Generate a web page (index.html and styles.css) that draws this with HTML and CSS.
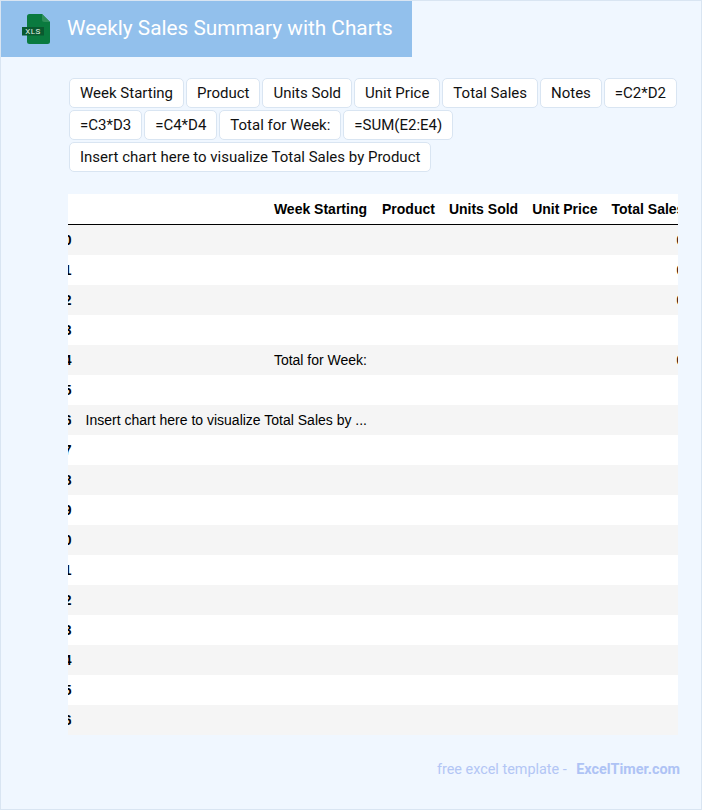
FILE: index.html
```html
<!DOCTYPE html>
<html lang="en">
<head>
<meta charset="utf-8">
<title>Weekly Sales Summary with Charts</title>
<link rel="stylesheet" href="styles.css">
</head>
<body>
<div class="page">
  <header class="banner">
    <svg class="logo" width="30" height="32" viewBox="0 0 30 32" aria-hidden="true">
      <path d="M6 3.500A2.500 2.500 0 0 1 8.500 1H21L29 9V28.500A2.500 2.500 0 0 1 26.500 31H8.500A2.500 2.500 0 0 1 6 28.500Z" fill="#0a7a3f"/>
      <path d="M21 1V6.500A2.500 2.500 0 0 0 23.500 9H29Z" fill="#2f8f5a"/>
      <rect x="1" y="14" width="22" height="8.500" fill="#09592f"/>
      <text x="12" y="21" class="logo-text" text-anchor="middle">XLS</text>
    </svg>
    <h1 class="title">Weekly Sales Summary with Charts</h1>
  </header>
  <main class="main">
    <div class="chips">
      <span class="chip">Week Starting</span>
      <span class="chip">Product</span>
      <span class="chip">Units Sold</span>
      <span class="chip">Unit Price</span>
      <span class="chip">Total Sales</span>
      <span class="chip">Notes</span>
      <span class="chip">=C2*D2</span>
      <span class="chip">=C3*D3</span>
      <span class="chip">=C4*D4</span>
      <span class="chip">Total for Week:</span>
      <span class="chip">=SUM(E2:E4)</span>
      <span class="chip">Insert chart here to visualize Total Sales by Product</span>
    </div>
    <div class="table-wrap">
      <table class="data">
        <thead>
          <tr><th></th><th>Week Starting</th><th>Product</th><th>Units Sold</th><th>Unit Price</th><th>Total Sales</th><th>Notes</th></tr>
        </thead>
        <tbody>
          <tr><th>0</th><td></td><td></td><td></td><td></td><td>0</td><td></td></tr>
          <tr><th>1</th><td></td><td></td><td></td><td></td><td>0</td><td></td></tr>
          <tr><th>2</th><td></td><td></td><td></td><td></td><td>0</td><td></td></tr>
          <tr><th>3</th><td></td><td></td><td></td><td></td><td></td><td></td></tr>
          <tr><th>4</th><td>Total for Week:</td><td></td><td></td><td></td><td>0</td><td></td></tr>
          <tr><th>5</th><td></td><td></td><td></td><td></td><td></td><td></td></tr>
          <tr><th>6</th><td>Insert chart here to visualize Total Sales by ...</td><td></td><td></td><td></td><td></td><td></td></tr>
          <tr><th>7</th><td></td><td></td><td></td><td></td><td></td><td></td></tr>
          <tr><th>8</th><td></td><td></td><td></td><td></td><td></td><td></td></tr>
          <tr><th>9</th><td></td><td></td><td></td><td></td><td></td><td></td></tr>
          <tr><th>10</th><td></td><td></td><td></td><td></td><td></td><td></td></tr>
          <tr><th>11</th><td></td><td></td><td></td><td></td><td></td><td></td></tr>
          <tr><th>12</th><td></td><td></td><td></td><td></td><td></td><td></td></tr>
          <tr><th>13</th><td></td><td></td><td></td><td></td><td></td><td></td></tr>
          <tr><th>14</th><td></td><td></td><td></td><td></td><td></td><td></td></tr>
          <tr><th>15</th><td></td><td></td><td></td><td></td><td></td><td></td></tr>
          <tr><th>16</th><td></td><td></td><td></td><td></td><td></td><td></td></tr>
        </tbody>
      </table>
    </div>
  </main>
  <footer class="footer">free excel template - <a class="brand">ExcelTimer.com</a></footer>
</div>
</body>
</html>
```
FILE: styles.css
```css
* { box-sizing: border-box; }
html, body { margin: 0; padding: 0; }
body { font-family: Roboto, "Liberation Sans", sans-serif; color: #111; }
.page {
  width: 702px;
  height: 810px;
  background: #f0f7ff;
  border: 1px solid #d9e5f2;
  overflow: hidden;
}
.banner {
  width: 411px;
  height: 56px;
  background: #92c0ec;
  display: flex;
  align-items: center;
  padding-left: 20px;
  gap: 16px;
}
.logo { flex: none; }
.logo-text { font: 400 8px Roboto, sans-serif; fill: #e4f3ea; letter-spacing: .5px; }
.title {
  margin: 0 0 2px;
  font-size: 20.8px;
  font-weight: 400;
  color: #fff;
  white-space: nowrap;
}
.main { padding: 21px 23px 0 67px; }
.chips {
  display: flex;
  flex-wrap: wrap;
  gap: 2px;
  padding-left: 1px;
}
.chip {
  height: 30px;
  line-height: 28px;
  padding: 0 10px;
  font-size: 15px;
  color: #111;
  background: #fff;
  border: 1px solid #d9e5f2;
  border-radius: 5px;
  white-space: nowrap;
}
.table-wrap {
  margin-top: 22px;
  background: #fff;
  overflow: hidden;
}
.data {
  margin-left: -19px;
  border-collapse: collapse;
  font-family: "Liberation Sans", Arial, sans-serif;
  font-size: 14px;
  color: #000;
  white-space: nowrap;
}
.data th, .data td {
  padding: 7px;
  text-align: right;
  line-height: 16px;
  height: 30px;
}
.data tr > :nth-child(2) { padding-right: 8px; }
.data thead th { border-bottom: 1px solid #000; font-weight: 700; }
.data tbody th { font-weight: 700; }
.data tbody tr:nth-child(odd) { background: #f5f5f5; }
.footer {
  margin-top: 25px;
  padding-right: 21px;
  text-align: right;
  font-size: 14.4px;
  line-height: 20px;
  color: #b3c6f5;
}
.brand { font-weight: 700; margin-left: 6px; color: #aec3f5; }
```
